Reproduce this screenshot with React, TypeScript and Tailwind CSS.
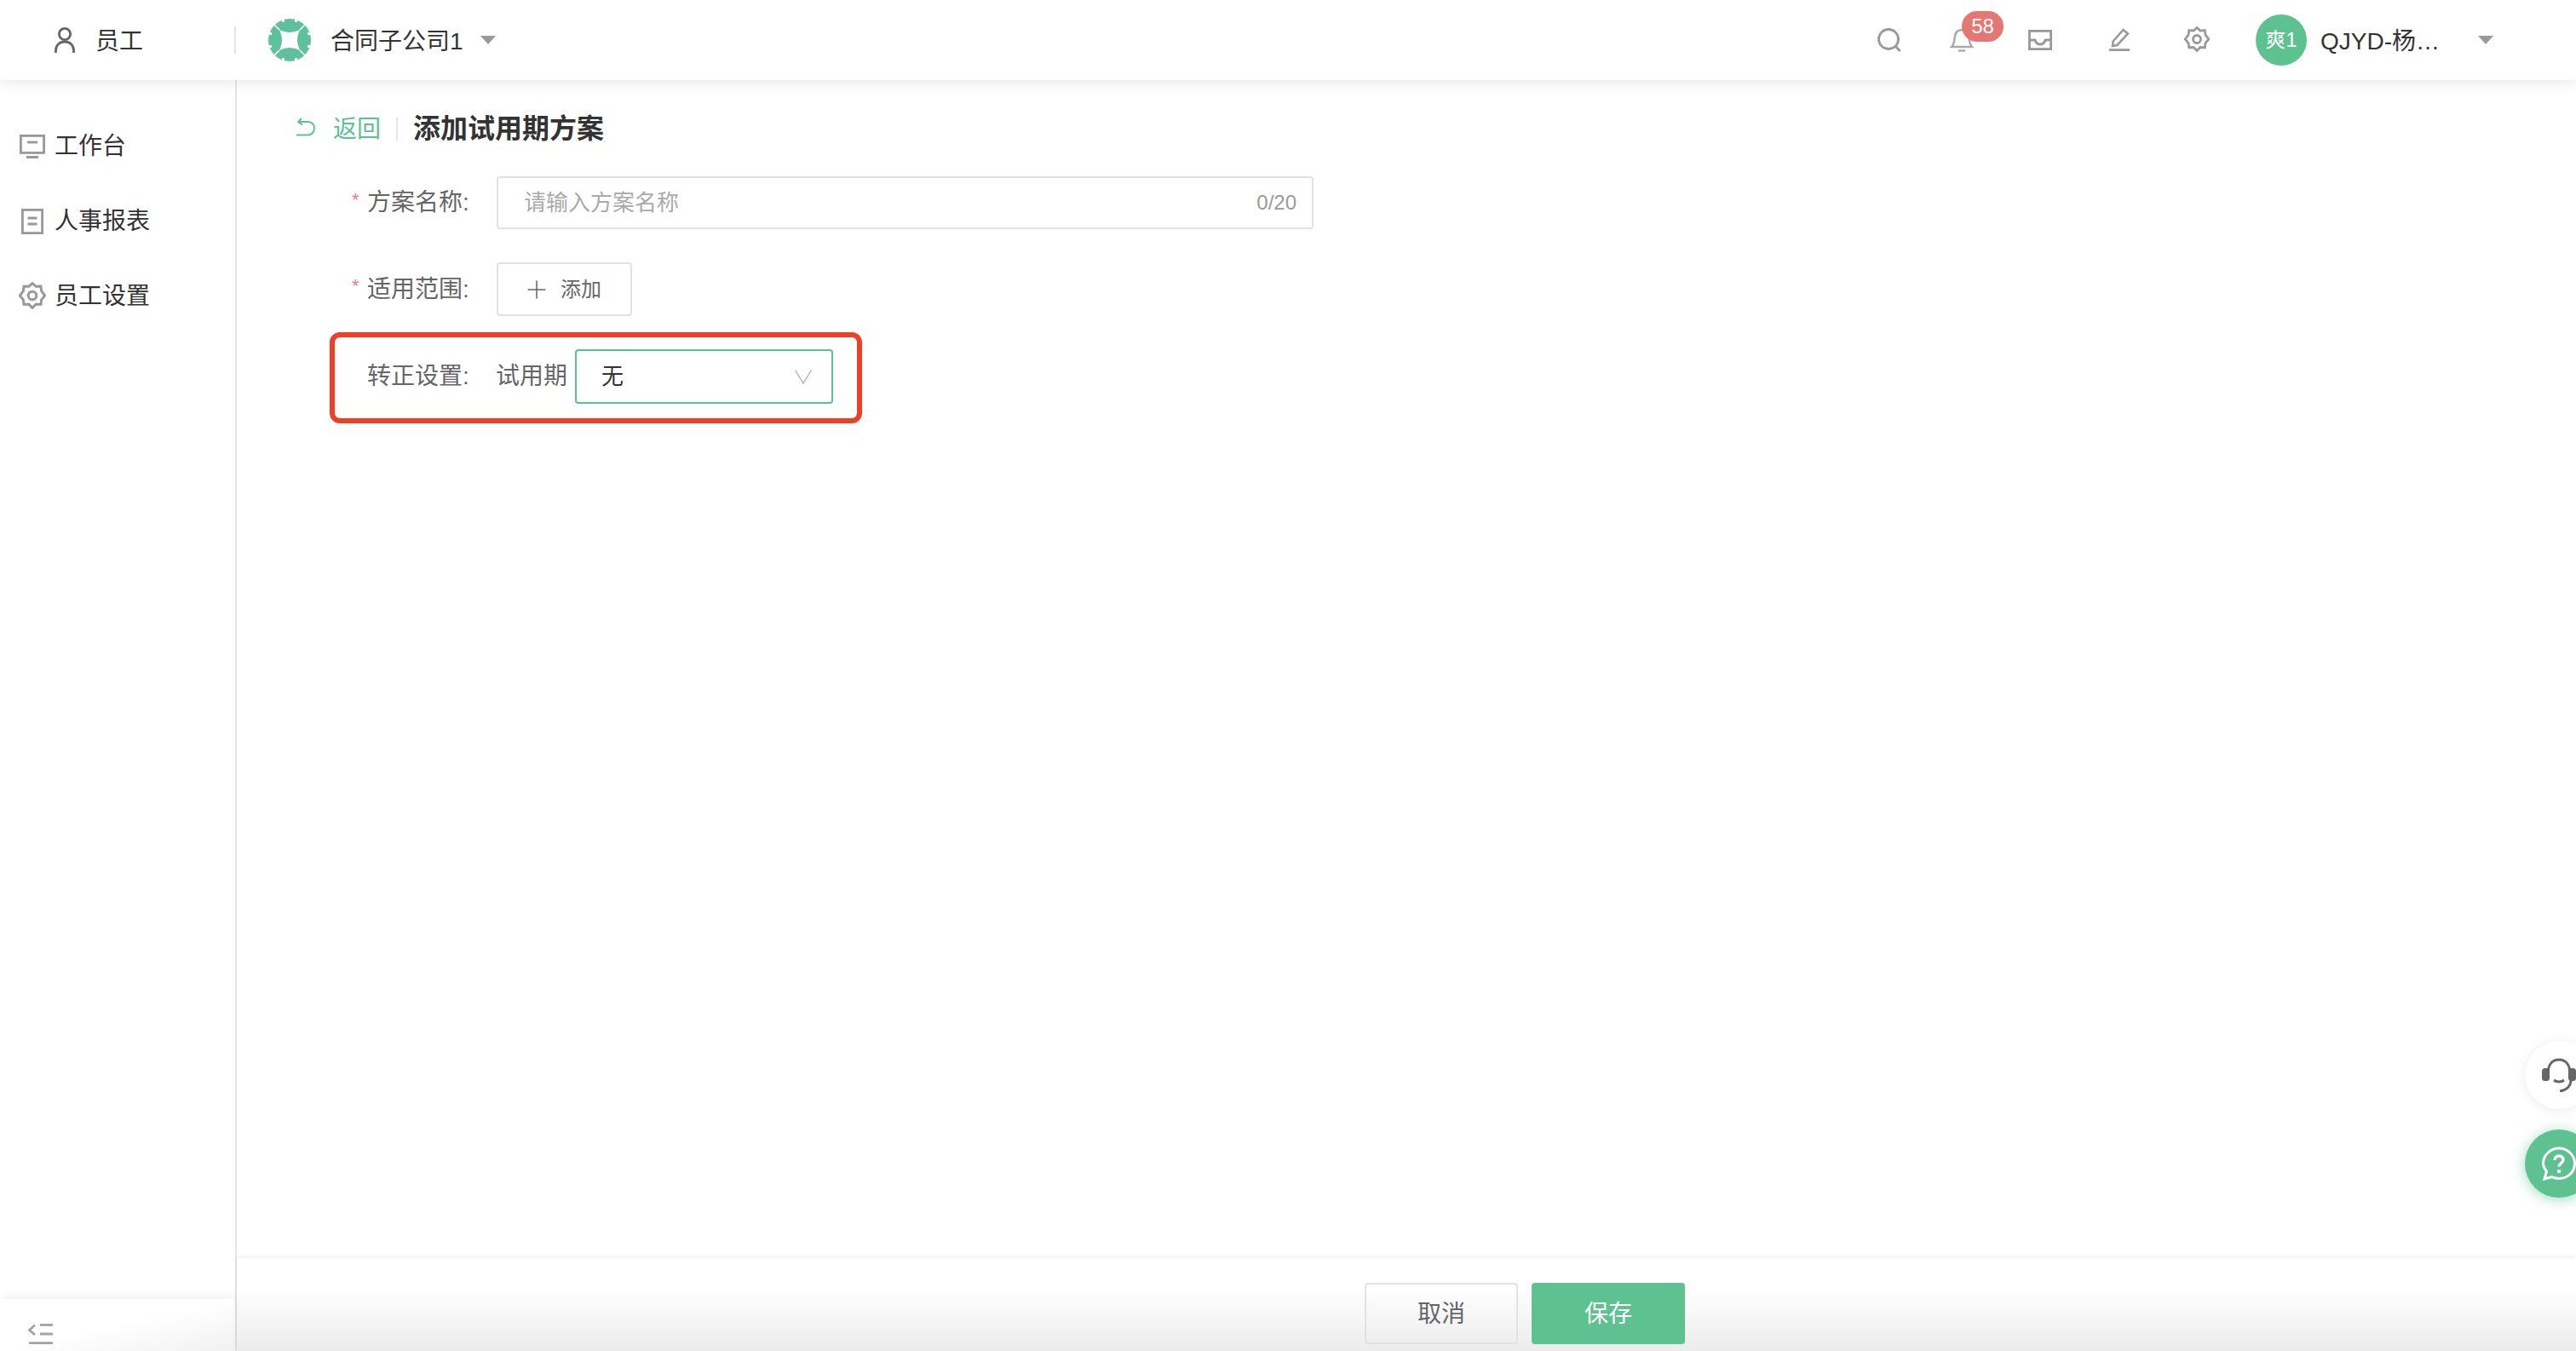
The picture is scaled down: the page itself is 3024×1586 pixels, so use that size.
import { Plus } from 'lucide-react';

const PersonIcon = () => (
  <svg width="24" height="30" viewBox="0 0 24 30" fill="none" stroke="#666" strokeWidth="2.8">
    <circle cx="12" cy="8" r="6.6" />
    <path d="M1.500 30v-3c0-6 4.500-10 10.500-10s10.500 4 10.500 10v3" />
  </svg>
);

const Logo = () => (
  <svg width="50" height="50" viewBox="0 0 50 50">
    <circle cx="25" cy="25" r="25" fill="#5fc09c" />
    <path d="M13 13Q25 19 37 13Q31 25 37 37Q25 31 13 37Q19 25 13 13Z" fill="#fff" />
    <path d="M13 13L3 3M37 13L47 3M37 37L47 47M13 37L3 47" stroke="#fff" strokeWidth="1.6" />
    <path d="M16 0h3v4h-3zM31 0h3v4h-3zM16 46h3v4h-3zM31 46h3v4h-3zM0 16h4v3h-4zM0 31h4v3h-4zM46 16h4v3h-4zM46 31h4v3h-4z" fill="#fff" />
  </svg>
);

const Caret = () => (
  <svg width="18" height="10" viewBox="0 0 18 10" className="shrink-0">
    <path d="M0 0h18L9 10z" fill="#999" />
  </svg>
);

const SearchIcon = () => (
  <svg width="28" height="28" viewBox="0 0 28 28" fill="none" stroke="#999" strokeWidth="2.8">
    <circle cx="13" cy="13" r="11.500" />
    <path d="M21.500 21.500l5 5.500" />
  </svg>
);

const BellIcon = () => (
  <svg width="28" height="28" viewBox="0 0 28 28" fill="none" stroke="#aaa" strokeWidth="2.4">
    <path d="M2 22c3-3 3-6 3.500-10C6 6 9 2 14 2s8 4 8.500 10c.5 4 .5 7 3.500 10z" />
    <path d="M10 26.500h8" />
  </svg>
);

const InboxIcon = () => (
  <svg width="28" height="24" viewBox="0 0 28 24" fill="none" stroke="#999" strokeWidth="2.800">
    <rect x="1.400" y="1.400" width="25.200" height="21.200" />
    <path d="M1.400 12h6.600c1 3.500 3 5 6 5s5-1.500 6-5h6.600" />
  </svg>
);

const PenIcon = () => (
  <svg width="24" height="27" viewBox="0 0 24 27" fill="none" stroke="#999" strokeWidth="2.600">
    <path d="M4 21l.6-5.500L16.500 2l5.500 4.500L9.500 20z" />
    <path d="M0 25.600h24" strokeWidth="2.800" />
  </svg>
);

const GearIcon = ({ size, color = '#999' }: { size: number; color?: string }) => (
  <svg width={size} height={size} viewBox="0 0 30 30" fill="none" stroke={color} strokeWidth="2.800">
    <path d="M15 1.500l4 3.500 5.300-.3.700 5.300 3.800 5-3.800 4.500-.7 5.300-5.300-.3-4 4-4-4-5.300.3-.7-5.300L1.200 15 5 10l.7-5.300 5.300.3z" />
    <circle cx="15" cy="15" r="4.500" />
  </svg>
);

const DeskIcon = () => (
  <svg width="30" height="28" viewBox="0 0 30 28" fill="none" stroke="#999" strokeWidth="2.800">
    <rect x="1.400" y="1.400" width="27.200" height="20" />
    <path d="M9 9h12" />
    <path d="M8 26.500h14" strokeWidth="3" />
  </svg>
);

const ReportIcon = () => (
  <svg width="26" height="30" viewBox="0 0 26 30" fill="none" stroke="#999" strokeWidth="2.800">
    <rect x="1.400" y="1.400" width="23.200" height="27.200" />
    <path d="M7.500 11h11M7.500 18h11" />
  </svg>
);

const BackIcon = () => (
  <svg width="22" height="22" viewBox="0 0 22 22" fill="none" stroke="#5cc290" strokeWidth="2">
    <path d="M6 1L2 5l5 3.500" />
    <path d="M2 5h11c5 0 8 3 8 7.500s-3 8-8 8H0" />
  </svg>
);

const SelectArrow = () => (
  <svg width="20" height="17" viewBox="0 0 20 17" fill="none" stroke="#b4b8c4" strokeWidth="1.500">
    <path d="M.6 .6L10 16 19.400 .6" />
  </svg>
);

const Headset = () => (
  <svg width="40" height="40" viewBox="0 0 40 40" fill="none" stroke="#666">
    <path d="M7 19C7 8 12 2 20 2s13 6 13 17" strokeWidth="3" />
    <rect x="0" y="12" width="9" height="15" rx="3.500" fill="#666" stroke="none" />
    <rect x="31" y="12" width="9" height="15" rx="3.500" fill="#666" stroke="none" />
    <path d="M14 26c3 2.500 9 2.500 12 0" strokeWidth="3" />
    <path d="M34 26c0 7-5 12-13 13" strokeWidth="3" />
  </svg>
);

const HelpBubble = () => (
  <svg width="40" height="40" viewBox="0 0 40 40" fill="none" stroke="#fff" strokeWidth="3">
    <path d="M3 38l2.500-9C3 26 1.500 23 1.500 20 1.500 10 10 2 20 2s18.500 8 18.500 18S30 37.500 20 37.500c-3.500 0-6-.6-8.500-2z" />
    <path d="M15 16c0-3 2-5 5-5s5 2 5 4.500c0 4-5 4-5 8" strokeWidth="3.500" />
    <path d="M18 27h4v4h-4z" fill="#fff" stroke="none" />
  </svg>
);

const CollapseIcon = () => (
  <svg width="29" height="24" viewBox="0 0 29 24" fill="none" stroke="#a3a3a3" strokeWidth="2.800">
    <path d="M8 1.500L1.500 7.500 8 13" />
    <path d="M14 1.400h15M14 12h15M1 22.600h28" />
  </svg>
);

const navItems = [
  { label: '工作台', icon: <DeskIcon /> },
  { label: '人事报表', icon: <ReportIcon /> },
  { label: '员工设置', icon: <div className="-mt-[2px]"><GearIcon size={32} /></div> },
];

const FieldLabel = ({ text, required }: { text: string; required?: boolean }) => (
  <div className="flex w-[170px] shrink-0 items-center text-[28px] text-[#666]">
    <span className="w-[18px] pb-[8px] text-[22px] text-[#ee7c7c]">{required ? '*' : ''}</span>
    <span>{text}</span>
  </div>
);

export default function App() {
  return (
    <div className="relative flex h-[1586px] w-[3024px] flex-col overflow-hidden bg-white font-['Liberation_Sans','Noto_Sans_CJK_SC',sans-serif] text-[#333]">
      {/* Top bar */}
      <header className="z-10 flex h-[94px] shrink-0 items-center bg-white pl-[64px] shadow-[0_4px_14px_rgba(0,0,0,0.08)]">
        <PersonIcon />
        <span className="ml-[24px] pt-[3px] text-[28px]">员工</span>
        <div className="ml-[107px] h-[32px] w-[2px] bg-[#e5e5e5]" />
        <div className="ml-[38px]"><Logo /></div>
        <span className="ml-[23px] pt-[3px] text-[28px]">合同子公司1</span>
        <div className="ml-[20px]"><Caret /></div>

        <div className="ml-auto flex items-center pr-[97px]">
          <SearchIcon />
          <div className="relative ml-[57px]">
            <BellIcon />
            <span className="absolute -top-[20px] left-[14px] flex h-[36px] w-[49px] items-center justify-center rounded-[18px] bg-[#e57773] text-[24px] text-white">58</span>
          </div>
          <div className="ml-[64px]"><InboxIcon /></div>
          <div className="ml-[67px] -mt-[2px]"><PenIcon /></div>
          <div className="ml-[64px] -mt-[3px]"><GearIcon size={30} /></div>
          <div className="ml-[54px] flex h-[60px] w-[60px] items-center justify-center rounded-full bg-[#5dc190] text-[24px] text-white">爽1</div>
          <span className="ml-[16px] w-[185px] pt-[3px] text-[28px]">QJYD-杨…</span>
          <Caret />
        </div>
      </header>

      <div className="flex min-h-0 flex-1">
        {/* Sidebar */}
        <aside className="flex w-[278px] shrink-0 flex-col border-r-2 border-[#e5e5e5]">
          <nav className="flex flex-1 flex-col gap-[48px] pl-[22px] pt-[58px]">
            {navItems.map((item) => (
              <div key={item.label} className="flex h-[40px] items-center text-[28px]">
                <div className="flex w-[32px] justify-center">{item.icon}</div>
                <span className="ml-[10px]">{item.label}</span>
              </div>
            ))}
          </nav>
          <div className="flex h-[61px] shrink-0 items-start bg-gradient-to-br from-white from-50% to-[#f1f1f1] pl-[33px] pt-[29px] shadow-[0_-3px_10px_rgba(0,0,0,0.06)]">
            <CollapseIcon />
          </div>
        </aside>

        <main className="flex min-w-0 flex-1 flex-col">
          <div className="flex-1">
            <div className="ml-[70px] mt-[37px] flex h-[40px] items-center">
              <div className="-mt-[4px]"><BackIcon /></div>
              <span className="ml-[21px] pt-[1px] text-[28px] text-[#5cc290]">返回</span>
              <div className="ml-[18px] h-[28px] w-[2px] bg-[#e8e8e8]" />
              <h1 className="ml-[18px] text-[32px] font-bold text-[#333]">添加试用期方案</h1>
            </div>

            <div className="ml-[135px] mt-[36px] flex flex-col">
              <div className="flex items-center">
                <FieldLabel text="方案名称:" required />
                <div className="flex h-[62px] w-[959px] items-center rounded-[4px] border-2 border-[#e2e2e2] pl-[30px] pr-[18px]">
                  <input
                    placeholder="请输入方案名称"
                    className="min-w-0 flex-1 bg-transparent text-[26px] outline-none placeholder:text-[#aaa]"
                  />
                  <span className="text-[24px] text-[#999]">0/20</span>
                </div>
              </div>

              <div className="mt-[39px] flex items-center">
                <FieldLabel text="适用范围:" required />
                <button className="flex h-[63px] w-[159px] items-center rounded-[4px] border-2 border-[#e2e2e2] pl-[28px] text-[24px] text-[#666]">
                  <Plus size={34} strokeWidth={1.1} color="#666" />
                  <span className="ml-[11px]">添加</span>
                </button>
              </div>

              {/* Red annotation box drawn in the screenshot */}
              <div className="-ml-[26px] mt-[19px] flex h-[107px] w-[625px] items-center rounded-[12px] border-[6px] border-[#ee4026] pb-[3px] pl-[20px]">
                <FieldLabel text="转正设置:" />
                <span className="-ml-[1px] text-[28px] text-[#666]">试用期</span>
                <div className="ml-[9px] flex h-[64px] w-[303px] items-center justify-between rounded-[4px] border-2 border-[#5cc290] pl-[29px] pr-[23px]">
                  <span className="text-[26px]">无</span>
                  <SelectArrow />
                </div>
              </div>
            </div>
          </div>

          {/* Footer actions */}
          <footer className="flex h-[109px] shrink-0 items-start justify-center gap-[16px] bg-gradient-to-b from-white from-30% to-[#ececec] pl-[278px] pt-[29px] shadow-[0_-2px_6px_rgba(0,0,0,0.07)]">
            <button className="h-[72px] w-[180px] rounded-[4px] border-2 border-[#e2e2e2] pt-[2px] text-[28px] text-[#666]">取消</button>
            <button className="h-[72px] w-[180px] rounded-[4px] bg-[#5dc190] pt-[2px] text-[28px] text-white">保存</button>
          </footer>
        </main>
      </div>

      {/* Floating help buttons */}
      <div className="absolute left-[2964px] top-[1222px] flex h-[80px] w-[80px] items-center justify-center rounded-full bg-white shadow-[0_2px_14px_rgba(0,0,0,0.08)]">
        <Headset />
      </div>
      <div className="absolute left-[2964px] top-[1326px] flex h-[80px] w-[80px] items-center justify-center rounded-full bg-[#5dc190] shadow-[0_2px_16px_rgba(93,193,144,0.6)]">
        <HelpBubble />
      </div>
    </div>
  );
}
